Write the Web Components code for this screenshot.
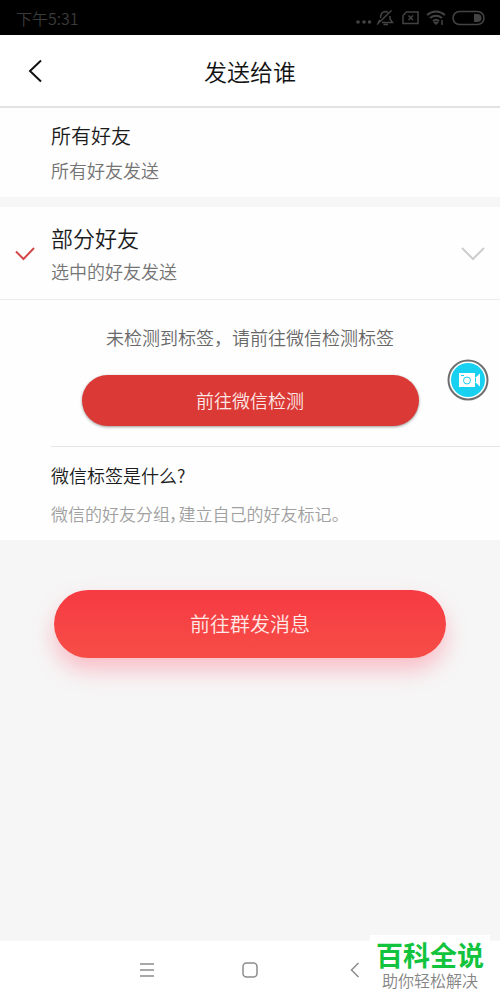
<!DOCTYPE html>
<html lang="zh-CN">
<head>
<meta charset="utf-8">
<meta name="viewport" content="width=device-width, initial-scale=1">
<title>发送给谁</title>
<style>
  body { margin: 0; font-family: "Noto Sans CJK SC", sans-serif; font-weight: 350; color: #1c1c1c; background: #f6f6f6; }
</style>
</head>
<body>
<send-page></send-page>
<script>
const define = (name, html) => {
  const template = document.createElement('template');
  template.innerHTML = html;
  customElements.define(name, class extends HTMLElement {
    constructor() {
      super();
      this.attachShadow({ mode: 'open' }).append(template.content.cloneNode(true));
    }
  });
};

define('status-bar', `
  <style>
    :host { display: flex; align-items: center; justify-content: space-between; box-sizing: border-box; height: 35px; padding: 0 15px 0 16px; background: #000; color: #3b3b3b; font-size: 16px; line-height: 24px; }
    svg { display: block; }
  </style>
  <time>下午5:31</time>
  <svg width="130" height="24" viewBox="0 0 130 24" fill="none" stroke="#434343" stroke-width="1.5" aria-hidden="true">
    <g fill="#434343" stroke="none"><circle cx="3" cy="16" r="1.800"/><circle cx="9" cy="16" r="1.800"/><circle cx="14.500" cy="16" r="1.800"/></g>
    <path d="M25.500 12Q25.500 6 30 5.500Q32 5.500 33 6.500M35 10V13L37.500 16.500H27M28.500 18.500H33M22 18.500L36.500 4.500M23 16.500L25 14"/>
    <path d="M51.500 6H63V17.500H48V9.500ZM53.500 9.500L58 14M58 9.500L53.500 14"/>
    <path d="M72 9Q81 2 90 9M75 12Q81 7.500 87 12M78 15Q81 12.500 84 15" stroke-width="2"/><path d="M79.500 16.500H82.500L81 18ZM87 14V19"/>
    <rect x="98" y="5.500" width="31" height="13" rx="6.500"/><path d="M119 8H123Q126.500 8.500 126.500 12T123 16H119Z" fill="#434343" stroke="none"/>
  </svg>`);

define('title-bar', `
  <style>
    :host { display: grid; grid-template-columns: 72px 1fr 72px; align-items: center; height: 71px; background: #fff; border-bottom: 2px solid #e3e3e3; }
    button { display: flex; align-items: center; height: 48px; padding: 0 0 0 26px; border: 0; background: none; }
    h1 { margin: 0; font-size: 23px; line-height: 32px; font-weight: inherit; text-align: center; color: #111; }
  </style>
  <button type="button" aria-label="返回"><svg width="18" height="24" viewBox="0 0 18 24" fill="none" stroke="#111" stroke-width="2"><path d="M15 1.500L4 12L15 22.500"/></svg></button>
  <h1><slot></slot></h1>`);

define('choice-row', `
  <style>
    :host { display: block; background: #fefefe; }
    button { display: grid; grid-template-columns: 51px 1fr 39px; align-items: center; width: 100%; padding: var(--row-padding, 13px 0); border: 0; background: none; font: inherit; text-align: left; }
    .text { display: grid; gap: 6px; }
    .name { font-size: var(--name-size, 20px); line-height: 30px; color: #1c1c1c; }
    .note { font-size: 18px; line-height: 27px; color: #747474; }
    .mark { display: flex; padding-left: 15px; }
  </style>
  <button type="button">
    <span class="mark"><slot name="mark"></slot></span>
    <span class="text"><span class="name"><slot></slot></span><span class="note"><slot name="note"></slot></span></span>
    <slot name="arrow"></slot>
  </button>`);

define('check-mark', `
  <style>:host { display: block; } svg { display: block; }</style>
  <svg width="20" height="14" viewBox="0 0 20 14" fill="none" stroke="#d34848" stroke-width="2"><path d="M1 4.500L8.500 12L19 1"/></svg>`);

define('down-arrow', `
  <style>:host { display: block; } svg { display: block; }</style>
  <svg width="24" height="14" viewBox="0 0 24 14" fill="none" stroke="#cdcdcd" stroke-width="2"><path d="M1 1L12 12L23 1"/></svg>`);

define('tag-check', `
  <style>
    :host { display: block; box-sizing: border-box; padding: 24px 0 20px; background: #fefefe; border-top: 1px solid #ececec; text-align: center; }
    p { margin: 0 0 24px; font-size: 18px; line-height: 27px; color: #686868; }
    button { display: block; width: calc(100% - 163px); height: 51px; margin: 0 auto; padding: 0 0 2px; border: 0; border-radius: 26px; background: #db3935; box-shadow: 0 1px 3px #0006; color: #fbe9e7; font: inherit; font-size: 18px; }
  </style>
  <p><slot></slot></p>
  <button type="button"><slot name="action"></slot></button>`);

define('tag-help', `
  <style>
    :host { display: block; padding-left: 51px; background: #fefefe; }
    section { display: grid; gap: 11px; padding: 15px 0 13px; border-top: 1px solid #e6e6e6; }
    h2, p { margin: 0; font-weight: inherit; line-height: 27px; }
    h2 { font-size: 18px; color: #1c1c1c; }
    p { font-size: 17px; color: #a0a0a0; font-feature-settings: "palt"; }
  </style>
  <section><h2><slot></slot></h2><p><slot name="answer"></slot></p></section>`);

define('send-button', `
  <style>
    :host { display: block; padding: 50px 54px; }
    button { display: block; width: 100%; height: 68px; padding: 0 0 2px; border: 0; border-radius: 34px; background: linear-gradient(#f63a43, #f64d46); box-shadow: 0 12px 22px #ff567059; color: #ffe9e7; font: inherit; font-size: 20px; }
  </style>
  <button type="button"><slot></slot></button>`);

define('record-bubble', `
  <style>
    :host { display: block; }
    button { display: block; padding: 0; border: 0; background: none; }
    svg { display: block; }
  </style>
  <button type="button" aria-label="录屏">
    <svg width="42" height="42" viewBox="0 0 42 42">
      <circle cx="21" cy="21" r="19.500" fill="#fff" stroke="#6e6e6e" stroke-width="2"/>
      <circle cx="21" cy="21" r="17" fill="#18d1f0"/>
      <path d="M12 14H28V19L33 14.500V27.500L28 23V28H12Z" fill="#fff"/>
      <circle cx="20" cy="21.500" r="3.500" fill="none" stroke="#18d1f0"/>
      <path d="M14 16.500H17M28.500 19V23" stroke="#18d1f0"/>
    </svg>
  </button>`);

define('nav-keys', `
  <style>
    :host { display: flex; align-items: center; justify-content: space-between; box-sizing: border-box; height: 60px; padding: 0 calc(28% - 1px) 2px; background: #fff; border-top: 1px solid #f8f8f8; }
    button { display: block; padding: 0; border: 0; background: none; }
    svg { display: block; fill: none; stroke: #8c8c8c; stroke-width: 1.5; }
  </style>
  <button type="button" aria-label="菜单"><svg width="16" height="16" viewBox="0 0 16 16"><path d="M1 2H15M1 8H15M1 14H15"/></svg></button>
  <button type="button" aria-label="主页"><svg width="16" height="16" viewBox="0 0 16 16"><rect x="1" y="1" width="14" height="14" rx="3.500"/></svg></button>
  <button type="button" aria-label="返回"><svg width="16" height="16" viewBox="0 0 16 16"><path d="M13.500 1L6.500 8L13.500 15"/></svg></button>`);

define('site-badge', `
  <style>
    :host { display: grid; justify-items: center; align-content: start; box-sizing: border-box; width: 120px; height: 65px; padding-top: 6px; background: #fff; font-family: "Liberation Sans", "Noto Sans CJK SC", sans-serif; white-space: nowrap; }
    strong { font-size: 27px; line-height: 32px; font-weight: 700; color: #12c43d; }
    span { font-size: 16px; line-height: 18px; color: #858585; }
  </style>
  <strong>百科全说</strong><span>助你轻松解决</span>`);

define('send-page', `
  <style>
    :host { position: relative; display: flex; flex-direction: column; min-height: 100vh; }
    main { flex: 1; }
    .partial { margin-top: 10px; --name-size: 22px; --row-padding: 15px 0 14px; }
    record-bubble { position: absolute; right: 11px; top: 359px; }
    site-badge { position: absolute; right: 10px; bottom: 0; }
  </style>
  <status-bar></status-bar>
  <title-bar>发送给谁</title-bar>
  <main>
    <choice-row>所有好友<span slot="note">所有好友发送</span></choice-row>
    <choice-row class="partial"><check-mark slot="mark"></check-mark>部分好友<span slot="note">选中的好友发送</span><down-arrow slot="arrow"></down-arrow></choice-row>
    <tag-check>未检测到标签，请前往微信检测标签<span slot="action">前往微信检测</span></tag-check>
    <tag-help>微信标签是什么?<span slot="answer">微信的好友分组，建立自己的好友标记。</span></tag-help>
    <send-button>前往群发消息</send-button>
  </main>
  <nav-keys></nav-keys>
  <record-bubble></record-bubble>
  <site-badge></site-badge>`);
</script>
</body>
</html>
